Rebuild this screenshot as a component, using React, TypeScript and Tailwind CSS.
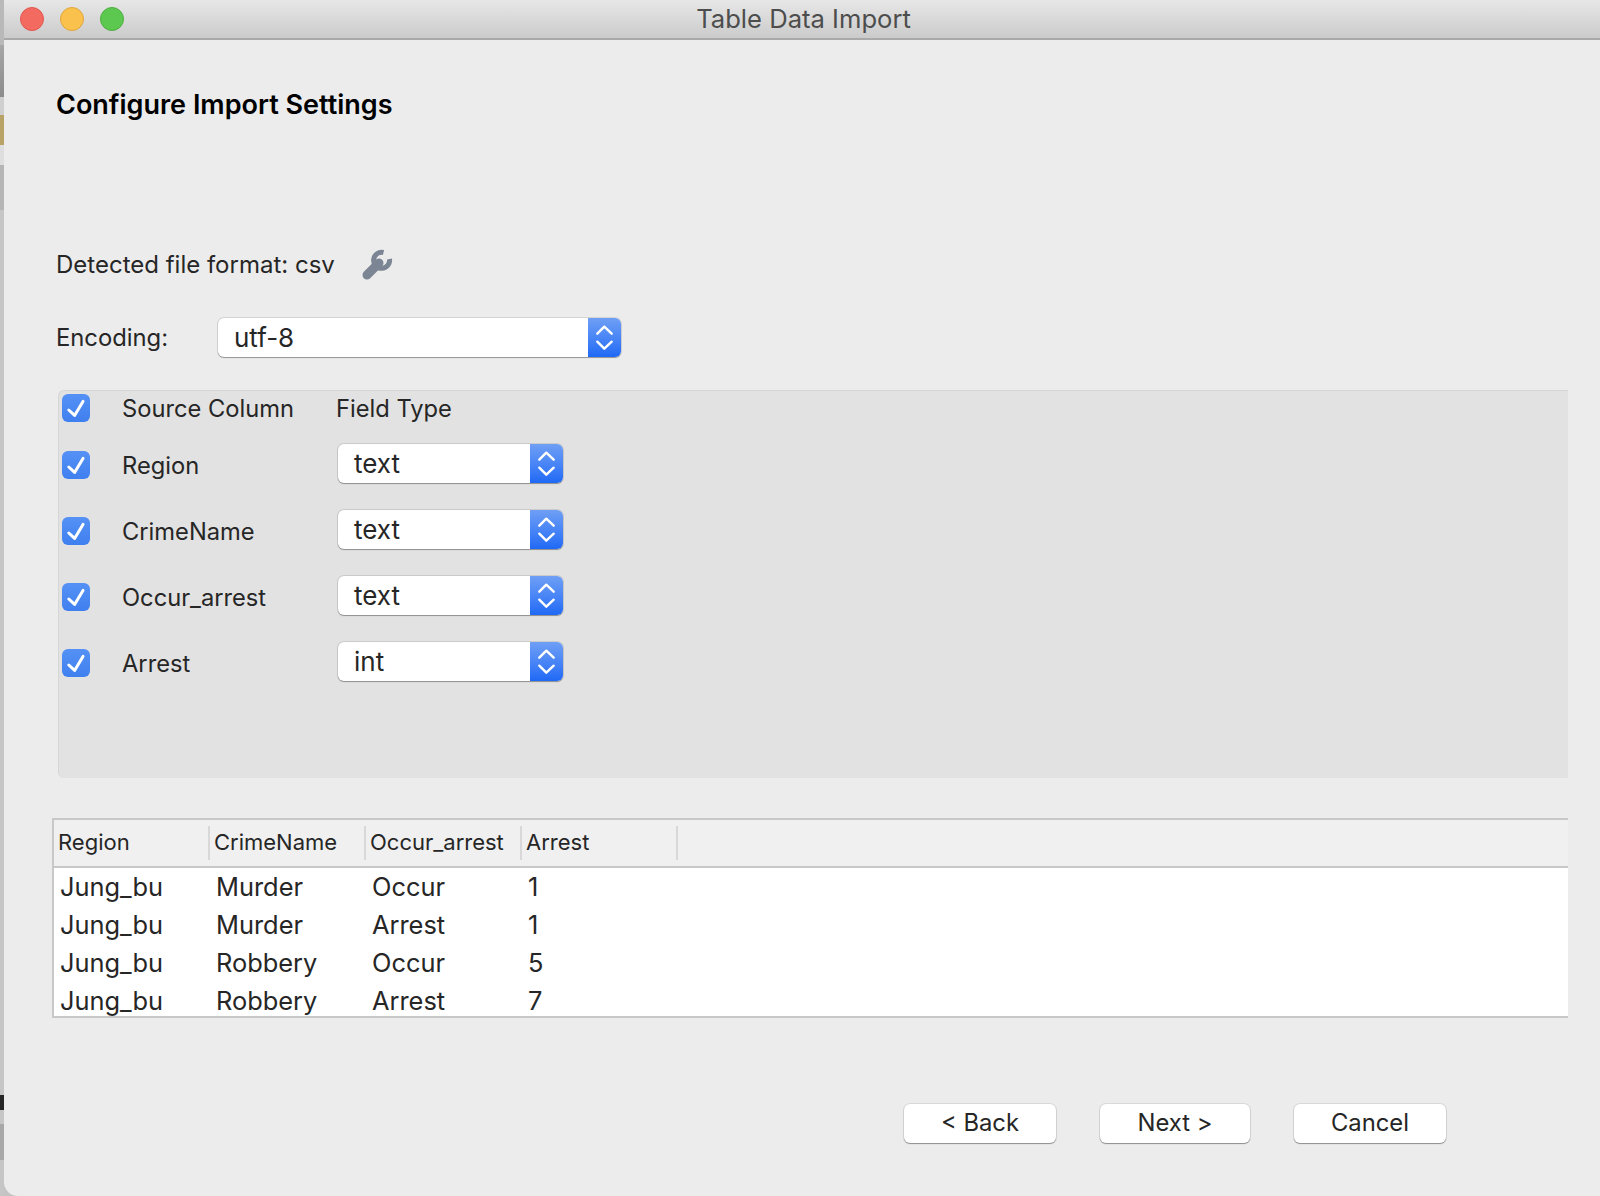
function Check() {
  return (
    <div className="flex h-[28px] w-[28px] shrink-0 items-center justify-center rounded-[6px] bg-gradient-to-b from-[#5591f5] to-[#3f7fef]">
      <svg width="28" height="28" viewBox="0 0 28 28" fill="none">
        <path d="M6.8 16 L12.6 21.4 L21 7.4" stroke="white" strokeWidth="3" strokeLinecap="round" strokeLinejoin="round" />
      </svg>
    </div>
  );
}

function Select({ value, width }: { value: string; width: string }) {
  return (
    <div className={`flex h-[39px] items-stretch rounded-[6px] bg-white shadow-[0_1px_1px_rgba(0,0,0,0.3),0_0_0_1px_rgba(0,0,0,0.1)] ${width}`}>
      <div className="flex flex-1 items-center pl-[16px] text-[26px] text-[#262626]">{value}</div>
      <div className="flex w-[33px] items-center justify-center rounded-r-[6px] bg-gradient-to-b from-[#6f9ff5] to-[#1f69f5]">
        <svg width="33" height="39" viewBox="0 0 33 39" fill="none">
          <path d="M9.3 15.7 L16.3 8.7 L23.7 15.7" stroke="white" strokeWidth="2.4" strokeLinecap="round" strokeLinejoin="round" />
          <path d="M9.3 23.7 L16.3 30.7 L23.7 23.7" stroke="white" strokeWidth="2.4" strokeLinecap="round" strokeLinejoin="round" />
        </svg>
      </div>
    </div>
  );
}

function FieldRow({ name, type }: { name: string; type: string }) {
  return (
    <div className="flex h-[66px] items-start">
      <div className="ml-[3px] mt-[8px]">
        <Check />
      </div>
      <div className="ml-[32px] mt-[8px] w-[216px] text-[23.7px] leading-[30px] text-[#262626]">{name}</div>
      <div className="mt-px">
        <Select value={type} width="w-[225px]" />
      </div>
    </div>
  );
}

function Button({ label, width }: { label: string; width: string }) {
  return (
    <div className={`flex h-[39px] items-center justify-center rounded-[6px] bg-white pb-[2px] text-[23.8px] text-[#262626] shadow-[0_1px_1px_rgba(0,0,0,0.35),0_0_0_1px_rgba(0,0,0,0.08)] ${width}`}>
      {label}
    </div>
  );
}

const rows = [
  ["Jung_bu", "Murder", "Occur", "1"],
  ["Jung_bu", "Murder", "Arrest", "1"],
  ["Jung_bu", "Robbery", "Occur", "5"],
  ["Jung_bu", "Robbery", "Arrest", "7"],
];

const heads = ["Region", "CrimeName", "Occur_arrest", "Arrest"];

export default function App() {
  return (
    <div className="flex h-[1196px] w-[1600px] overflow-hidden bg-[#c4c4c4] font-['Inter','Liberation_Sans',sans-serif]">
      <div className="flex w-[4px] shrink-0 flex-col">
        <div className="h-[45px] bg-[#b9b9b9]" />
        <div className="h-[52px] bg-gradient-to-b from-[#a6a6a6] to-[#8c8c8c]" />
        <div className="h-[18px] bg-[#cfcfcf]" />
        <div className="h-[30px] bg-[#b9a265]" />
        <div className="h-[20px] bg-[#dedede]" />
        <div className="h-[45px] bg-[#b5b5b5]" />
        <div className="h-[885px] bg-[#c6c6c6]" />
        <div className="h-[15px] bg-[#262626]" />
        <div className="h-[14px] bg-[#c6c6c6]" />
        <div className="h-[36px] bg-[#a8a8a8]" />
        <div className="flex-1 bg-[#c6c6c6]" />
      </div>
      <div className="flex flex-1 flex-col overflow-hidden rounded-bl-[14px] bg-[#ececec]">
        <div className="relative flex h-[40px] shrink-0 items-center border-b-2 border-[#a9a9a9] bg-gradient-to-b from-[#e7e7e7] to-[#cbcbcb]">
          <div className="ml-[16px] flex gap-[16px]">
            <div className="h-[24px] w-[24px] rounded-full border border-[#e0564e] bg-[#f36b60]" />
            <div className="h-[24px] w-[24px] rounded-full border border-[#e0a63c] bg-[#fac14d]" />
            <div className="h-[24px] w-[24px] rounded-full border border-[#4fae42] bg-[#5cc84f]" />
          </div>
          <div className="absolute inset-x-0 top-0 flex h-[38px] items-center justify-center pl-[3px] text-[25.6px] text-[#4d4d4d]">
            Table Data Import
          </div>
        </div>

        <div className="flex flex-1 flex-col pl-[48px]">
          <div className="ml-[4px] mt-[46px] text-[27px] font-semibold leading-[38px] text-black">Configure Import Settings</div>

          <div className="ml-[4px] mt-[121px] flex h-[40px] items-center">
            <span className="text-[24px] text-[#262626]">Detected file format: csv</span>
            <svg className="ml-[26px]" width="32" height="32" viewBox="0 0 32 32" fill="none">
              <path d="M6 26 L18 14" stroke="#7c8593" strokeWidth="9" strokeLinecap="round" />
              <path d="M22.5 3.5 A8 8 0 1 0 28.5 10" stroke="#7c8593" strokeWidth="5" strokeLinecap="butt" />
            </svg>
          </div>

          <div className="ml-[4px] mt-[33px] flex h-[39px] items-center">
            <span className="w-[162px] text-[23.8px] text-[#262626]">Encoding:</span>
            <Select value="utf-8" width="w-[403px]" />
          </div>

          <div className="ml-[6px] mt-[33px] h-[388px] w-[1510px] rounded-l-[6px] border-t border-l border-[#d6d6d6] bg-[#e2e2e2] pt-[3px]">
            <div className="flex h-[49px] items-start">
              <div className="ml-[3px]">
                <Check />
              </div>
              <div className="ml-[32px] w-[214px] text-[23.7px] leading-[30px] text-[#262626]">Source Column</div>
              <div className="text-[23.7px] leading-[30px] text-[#262626]">Field Type</div>
            </div>
            <FieldRow name="Region" type="text" />
            <FieldRow name="CrimeName" type="text" />
            <FieldRow name="Occur_arrest" type="text" />
            <FieldRow name="Arrest" type="int" />
          </div>

          <div className="mt-[40px] h-[200px] w-[1516px] overflow-hidden border-y-2 border-l-2 border-[#c8c8c8] bg-white">
            <div className="flex h-[48px] items-center border-b-2 border-[#c8c8c8] bg-[#f0f0f0]">
              {heads.map((h) => (
                <div key={h} className="h-[34px] w-[156px] border-r-2 border-[#d8d8d8] pl-[4px] text-[22px] leading-[32px] text-[#262626]">
                  {h}
                </div>
              ))}
            </div>
            {rows.map((r, i) => (
              <div key={i} className="flex h-[38px] items-center">
                {r.map((c, j) => (
                  <div key={j} className="w-[156px] pl-[6px] text-[25.4px] text-[#262626]">
                    {c}
                  </div>
                ))}
              </div>
            ))}
          </div>

          <div className="ml-[852px] mt-[86px] flex gap-[44px]">
            <Button label="< Back" width="w-[152px]" />
            <Button label="Next >" width="w-[150px]" />
            <Button label="Cancel" width="w-[152px]" />
          </div>
        </div>
      </div>
    </div>
  );
}
